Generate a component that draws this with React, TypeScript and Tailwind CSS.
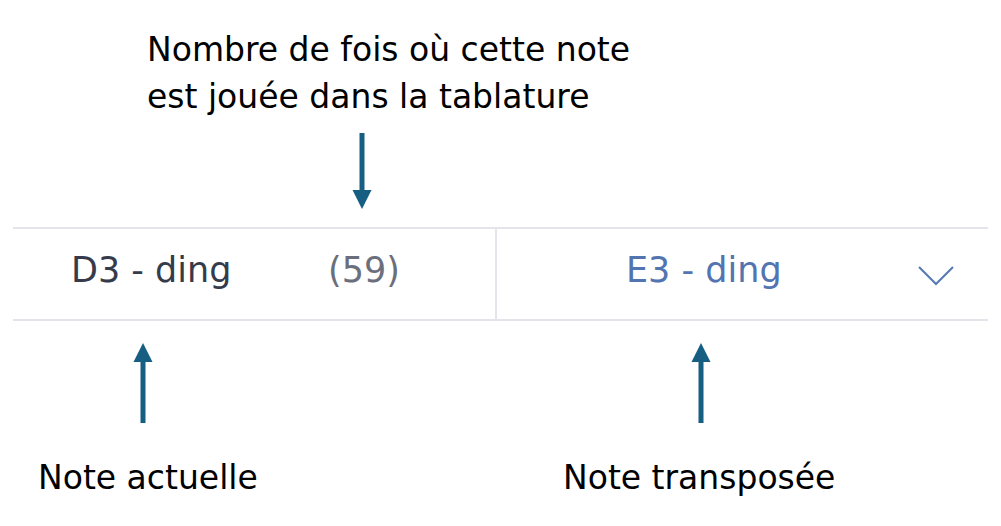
import React from "react";

const ARROW = "#175f82";

function ArrowDown() {
  return (
    <svg width="20" height="77" viewBox="0 0 20 77">
      <rect x="7.5" y="0" width="5" height="60" fill={ARROW} />
      <polygon points="0.5,57 19.5,57 10,76" fill={ARROW} />
    </svg>
  );
}

function ArrowUp() {
  return (
    <svg width="20" height="81" viewBox="0 0 20 81">
      <polygon points="10,0 19.5,19 0.5,19" fill={ARROW} />
      <rect x="7.5" y="16" width="5" height="64" fill={ARROW} />
    </svg>
  );
}

export default function App() {
  const note = { current: "D3 - ding", count: 59, transposed: "E3 - ding" };

  return (
    <div className="w-[1001px] h-[526px] bg-white overflow-hidden" style={{ fontFamily: "'DejaVu Sans', 'Noto Sans', sans-serif" }}>
      {/* Annotation: count */}
      <div className="pl-[147px] pt-[26px] text-[33px] leading-[47px] text-black">
        <p>Nombre de fois où cette note</p>
        <p>est jouée dans la tablature</p>
      </div>
      <div className="pl-[352px] pt-[13px] h-[107px]">
        <ArrowDown />
      </div>

      {/* Note row */}
      <div className="mx-[13px] h-[94px] flex border-y-2 border-[#e4e5ea]">
        <div className="w-[484px] shrink-0 flex items-center pb-[8px] border-r-2 border-[#e4e5ea] text-[35px]">
          <span className="pl-[58px] w-[315px] text-[#363b4c]">{note.current}</span>
          <span className="text-[#6b6f7d]">({note.count})</span>
        </div>
        <div className="flex-1 flex items-center pb-[8px] text-[35px]">
          <span className="pl-[129px] flex-1 text-[#5274b0]">{note.transposed}</span>
          <svg width="36" height="20" viewBox="0 0 36 20" className="mr-[34px] mt-[12px]">
            <polyline points="1,1 18,18 35,1" fill="none" stroke="#5577b3" strokeWidth="2" />
          </svg>
        </div>
      </div>

      {/* Annotation arrows */}
      <div className="h-[104px] pt-[22px] flex">
        <div className="pl-[133px]">
          <ArrowUp />
        </div>
        <div className="pl-[538px]">
          <ArrowUp />
        </div>
      </div>

      <div className="flex pt-[33px] text-[33px] leading-[40px] text-black">
        <p className="pl-[38px] w-[563px]">Note actuelle</p>
        <p>Note transposée</p>
      </div>
    </div>
  );
}
